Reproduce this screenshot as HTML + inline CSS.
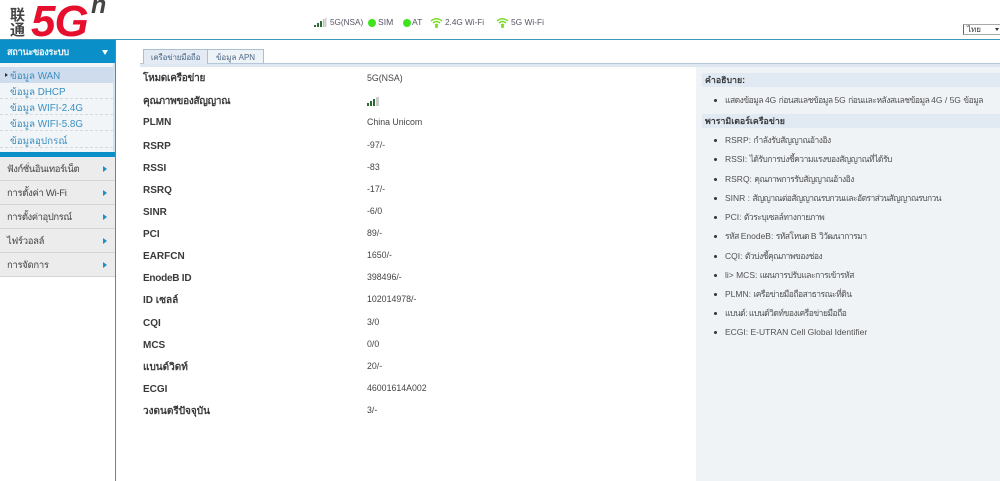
<!DOCTYPE html>
<html lang="th"><head><meta charset="utf-8"><title>5G</title>
<style>
html,body{margin:0;padding:0;background:#fff}
body{width:1000px;height:481px;overflow:hidden;position:relative;font-family:"Liberation Sans","DejaVu Sans","Noto Sans CJK SC",sans-serif;font-size:8.6px;color:#444}
.a{position:absolute;white-space:nowrap}
.l{position:absolute;left:143px;font-size:10px;font-weight:bold;color:#3a3a3a;white-space:nowrap;line-height:14px}
.t{letter-spacing:-.25px}
.v{position:absolute;left:367px;font-size:8.800px;color:#444;white-space:nowrap;line-height:14px}
.s{position:absolute;left:0;width:113px;height:16px;line-height:20px;font-size:9.800px;color:#3a8fc0;padding-left:10px;box-sizing:border-box;border-bottom:1px dashed #d8d8d8;white-space:nowrap}
.m{position:absolute;left:0;width:115px;height:24px;line-height:25px;background:#ececec;border-bottom:1px solid #d4d4d4;font-size:9.500px;color:#444;padding-left:7px;box-sizing:border-box;white-space:nowrap;letter-spacing:-.3px}
.m:after{content:"";position:absolute;left:103px;top:9px;border-left:4.500px solid #1590c8;border-top:3px solid transparent;border-bottom:3px solid transparent}
.h{position:absolute;left:702px;width:298px;height:14px;line-height:14px;background:#e1e9f3;font-size:8.800px;font-weight:bold;color:#3a3a3a;padding-left:3px;box-sizing:border-box;white-space:nowrap}
.b{position:absolute;left:725px;font-size:8.500px;color:#505050;line-height:12px;white-space:nowrap}
.b i{font-style:normal;letter-spacing:-.5px}
.b:before{content:"";position:absolute;left:-11px;top:5px;width:3px;height:3px;border-radius:50%;background:#333}
</style></head><body>
<!-- header -->
<div class="a" style="left:10px;top:7px;width:16px;font:bold 15px/15px 'Noto Sans CJK SC',sans-serif;color:#444;white-space:normal">联通</div>
<div class="a" style="left:31px;top:0px;font:italic bold 44px/44px 'Liberation Sans',sans-serif;color:#e60f2d;letter-spacing:-1px">5G</div>
<div class="a" style="left:91px;top:-10px;font:italic bold 25px/30px 'Liberation Sans',sans-serif;color:#444">n</div>

<svg class="a" style="left:314px;top:18px" width="13" height="10"><rect x="0" y="7" width="2" height="2" fill="#2d6b35"/><rect x="3" y="5" width="2" height="4" fill="#2d6b35"/><rect x="6" y="3" width="2" height="6" fill="#2d6b35"/><rect x="9" y="1" width="1.500" height="8" fill="#bbb"/><rect x="11" y="0" width="1.500" height="9" fill="#ccc"/></svg>
<div class="a" style="left:330px;top:16px;line-height:13px;color:#556;font-size:8.200px">5G(NSA)</div>
<div class="a" style="left:368px;top:19px;width:8px;height:8px;border-radius:50%;background:#3ee31e"></div>
<div class="a" style="left:378px;top:16px;line-height:13px;color:#556">SIM</div>
<div class="a" style="left:403px;top:19px;width:8px;height:8px;border-radius:50%;background:#3ee31e"></div>
<div class="a" style="left:412px;top:16px;line-height:13px;color:#556">AT</div>
<svg class="a" style="left:430px;top:17px" width="13" height="11" fill="none" stroke="#7bdc2c" stroke-width="1.500"><path d="M1 4Q6.500-.5 12 4M3 6Q6.500 3 10 6M5 8Q6.500 6.800 8 8"/><circle cx="6.500" cy="9.500" r=".8" fill="#7bdc2c"/></svg>
<div class="a" style="left:445px;top:16px;line-height:13px;color:#556;font-size:8.200px">2.4G Wi-Fi</div>
<svg class="a" style="left:496px;top:17px" width="13" height="11" fill="none" stroke="#7bdc2c" stroke-width="1.500"><path d="M1 4Q6.500-.5 12 4M3 6Q6.500 3 10 6M5 8Q6.500 6.800 8 8"/><circle cx="6.500" cy="9.500" r=".8" fill="#7bdc2c"/></svg>
<div class="a" style="left:511px;top:16px;line-height:13px;color:#556;font-size:8.400px">5G Wi-Fi</div>
<div class="a" style="left:963px;top:24px;width:37px;height:11px;border:1px solid #aaa;border-left-color:#666;border-right:0;box-sizing:border-box;font-size:8px;line-height:10px;padding-left:3px;color:#333">ไทย<span style="position:absolute;left:31px;top:3px;border-top:3px solid #333;border-left:2px solid transparent;border-right:2px solid transparent"></span></div>
<div class="a" style="left:0;top:39px;width:1000px;height:1px;background:#3f98b8"></div>

<!-- sidebar -->
<div class="a" style="left:115px;top:39px;width:1px;height:442px;background:#2a9ac8"></div>
<div class="a" style="left:0;top:40px;width:115px;height:23px;background:#0b8fc9;color:#f0f6fa;font-size:9.200px;font-weight:bold;line-height:25px;padding-left:7px;box-sizing:border-box;letter-spacing:-.3px">สถานะของระบบ</div>
<div class="a" style="left:102px;top:50px;border-top:5px solid #fff;border-left:3px solid transparent;border-right:3px solid transparent"></div>
<div class="a" style="left:0;top:63px;width:115px;height:89px;background:#f2f5f8"></div>
<div class="a" style="left:113px;top:63px;width:2px;height:89px;background:#cfe3ee"></div>
<div class="s" style="top:67px;background:#cfdcee;height:16px;border:0">ข้อมูล WAN</div>
<div class="a" style="left:5px;top:73px;border-left:3px solid #333;border-top:2.500px solid transparent;border-bottom:2.500px solid transparent"></div>
<div class="s" style="top:83px">ข้อมูล DHCP</div>
<div class="s" style="top:99px">ข้อมูล WIFI-2.4G</div>
<div class="s" style="top:115px">ข้อมูล WIFI-5.8G</div>
<div class="s" style="top:132px">ข้อมูลอุปกรณ์</div>
<div class="a" style="left:0;top:152px;width:115px;height:5px;background:#0b8fc9"></div>
<div class="m" style="top:157px;letter-spacing:-.45px">ฟังก์ชั่นอินเทอร์เน็ต</div>
<div class="m" style="top:181px">การตั้งค่า Wi-Fi</div>
<div class="m" style="top:205px;letter-spacing:-.45px">การตั้งค่าอุปกรณ์</div>
<div class="m" style="top:229px">ไฟร์วอลล์</div>
<div class="m" style="top:253px">การจัดการ</div>

<!-- tabs -->
<div class="a" style="left:143px;top:49px;width:65px;height:16px;background:#e3eaf4;border:1px solid #a9c0d2;border-bottom:0;box-sizing:border-box;text-align:center;font-size:8px;line-height:15px;color:#4c6a85;letter-spacing:-.2px">เครือข่ายมือถือ</div>
<div class="a" style="left:208px;top:49px;width:56px;height:15px;background:#eef3f8;border:1px solid #a9c0d2;border-left:0;border-bottom:0;box-sizing:border-box;text-align:center;font-size:8px;line-height:15px;color:#4c6a85">ข้อมูล APN</div>
<div class="a" style="left:140px;top:63px;width:860px;height:1px;background:#b6c8d8"></div>
<div class="a" style="left:140px;top:64px;width:860px;height:3px;background:#dfe7f1"></div>
<div class="a" style="left:144px;top:63px;width:63px;height:1px;background:#e3eaf4"></div>

<!-- rows -->
<div class="l t" style="top:72px">โหมดเครือข่าย</div><div class="v" style="top:71px">5G(NSA)</div>
<div class="l t" style="top:95px">คุณภาพของสัญญาณ</div>
<svg class="a" style="left:367px;top:96px" width="13" height="10"><rect x="0" y="7" width="2" height="3" fill="#2d6b35"/><rect x="3" y="5" width="2" height="5" fill="#2d6b35"/><rect x="6" y="3" width="2" height="7" fill="#2d6b35"/><rect x="9" y="1" width="3" height="9" fill="#ccc"/></svg>
<div class="l" style="top:116px">PLMN</div><div class="v" style="top:115px">China Unicom</div>
<div class="l" style="top:140px">RSRP</div><div class="v" style="top:138px">-97/-</div>
<div class="l" style="top:162px">RSSI</div><div class="v" style="top:160px">-83</div>
<div class="l" style="top:184px">RSRQ</div><div class="v" style="top:182px">-17/-</div>
<div class="l" style="top:206px">SINR</div><div class="v" style="top:204px">-6/0</div>
<div class="l" style="top:228px">PCI</div><div class="v" style="top:226px">89/-</div>
<div class="l" style="top:250px">EARFCN</div><div class="v" style="top:248px">1650/-</div>
<div class="l t" style="top:272px">EnodeB ID</div><div class="v" style="top:270px">398496/-</div>
<div class="l" style="top:294px">ID เซลล์</div><div class="v" style="top:292px">102014978/-</div>
<div class="l" style="top:317px">CQI</div><div class="v" style="top:315px">3/0</div>
<div class="l" style="top:339px">MCS</div><div class="v" style="top:337px">0/0</div>
<div class="l" style="top:361px">แบนด์วิดท์</div><div class="v" style="top:359px">20/-</div>
<div class="l" style="top:383px">ECGI</div><div class="v" style="top:381px">46001614A002</div>
<div class="l" style="top:405px">วงดนตรีปัจจุบัน</div><div class="v" style="top:403px">3/-</div>

<!-- help panel -->
<div class="a" style="left:696px;top:67px;width:304px;height:414px;background:#f0f3f6"></div>
<div class="h" style="top:73px">คำอธิบาย:</div>
<div class="b" style="top:94px"><i>แสดงข้อมูล </i>4G <i>ก่อนสแลชข้อมูล </i>5G <i>ก่อนและหลังสแลชข้อมูล </i>4G / 5G <i>ข้อมูล</i></div>
<div class="h" style="top:114px">พารามิเตอร์เครือข่าย</div>
<div class="b" style="top:134px">RSRP: <i>กำลังรับสัญญาณอ้างอิง</i></div>
<div class="b" style="top:153px">RSSI: <i>ได้รับการบ่งชี้ความแรงของสัญญาณที่ได้รับ</i></div>
<div class="b" style="top:173px">RSRQ: <i>คุณภาพการรับสัญญาณอ้างอิง</i></div>
<div class="b" style="top:192px">SINR : <i style="letter-spacing:-.58px">สัญญาณต่อสัญญาณรบกวนและอัตราส่วนสัญญาณรบกวน</i></div>
<div class="b" style="top:211px">PCI: <i>ตัวระบุเซลล์ทางกายภาพ</i></div>
<div class="b" style="top:230px"><i>รหัส </i>EnodeB: <i>รหัสโหนด </i>B <i>วิวัฒนาการมา</i></div>
<div class="b" style="top:250px">CQI: <i>ตัวบ่งชี้คุณภาพของช่อง</i></div>
<div class="b" style="top:269px">li&gt; MCS: <i>แผนการปรับและการเข้ารหัส</i></div>
<div class="b" style="top:288px">PLMN: <i>เครือข่ายมือถือสาธารณะที่ดิน</i></div>
<div class="b" style="top:307px"><i>แบนด์: แบนด์วิดท์ของเครือข่ายมือถือ</i></div>
<div class="b" style="top:326px">ECGI: E-UTRAN Cell Global Identifier</div>
</body></html>
